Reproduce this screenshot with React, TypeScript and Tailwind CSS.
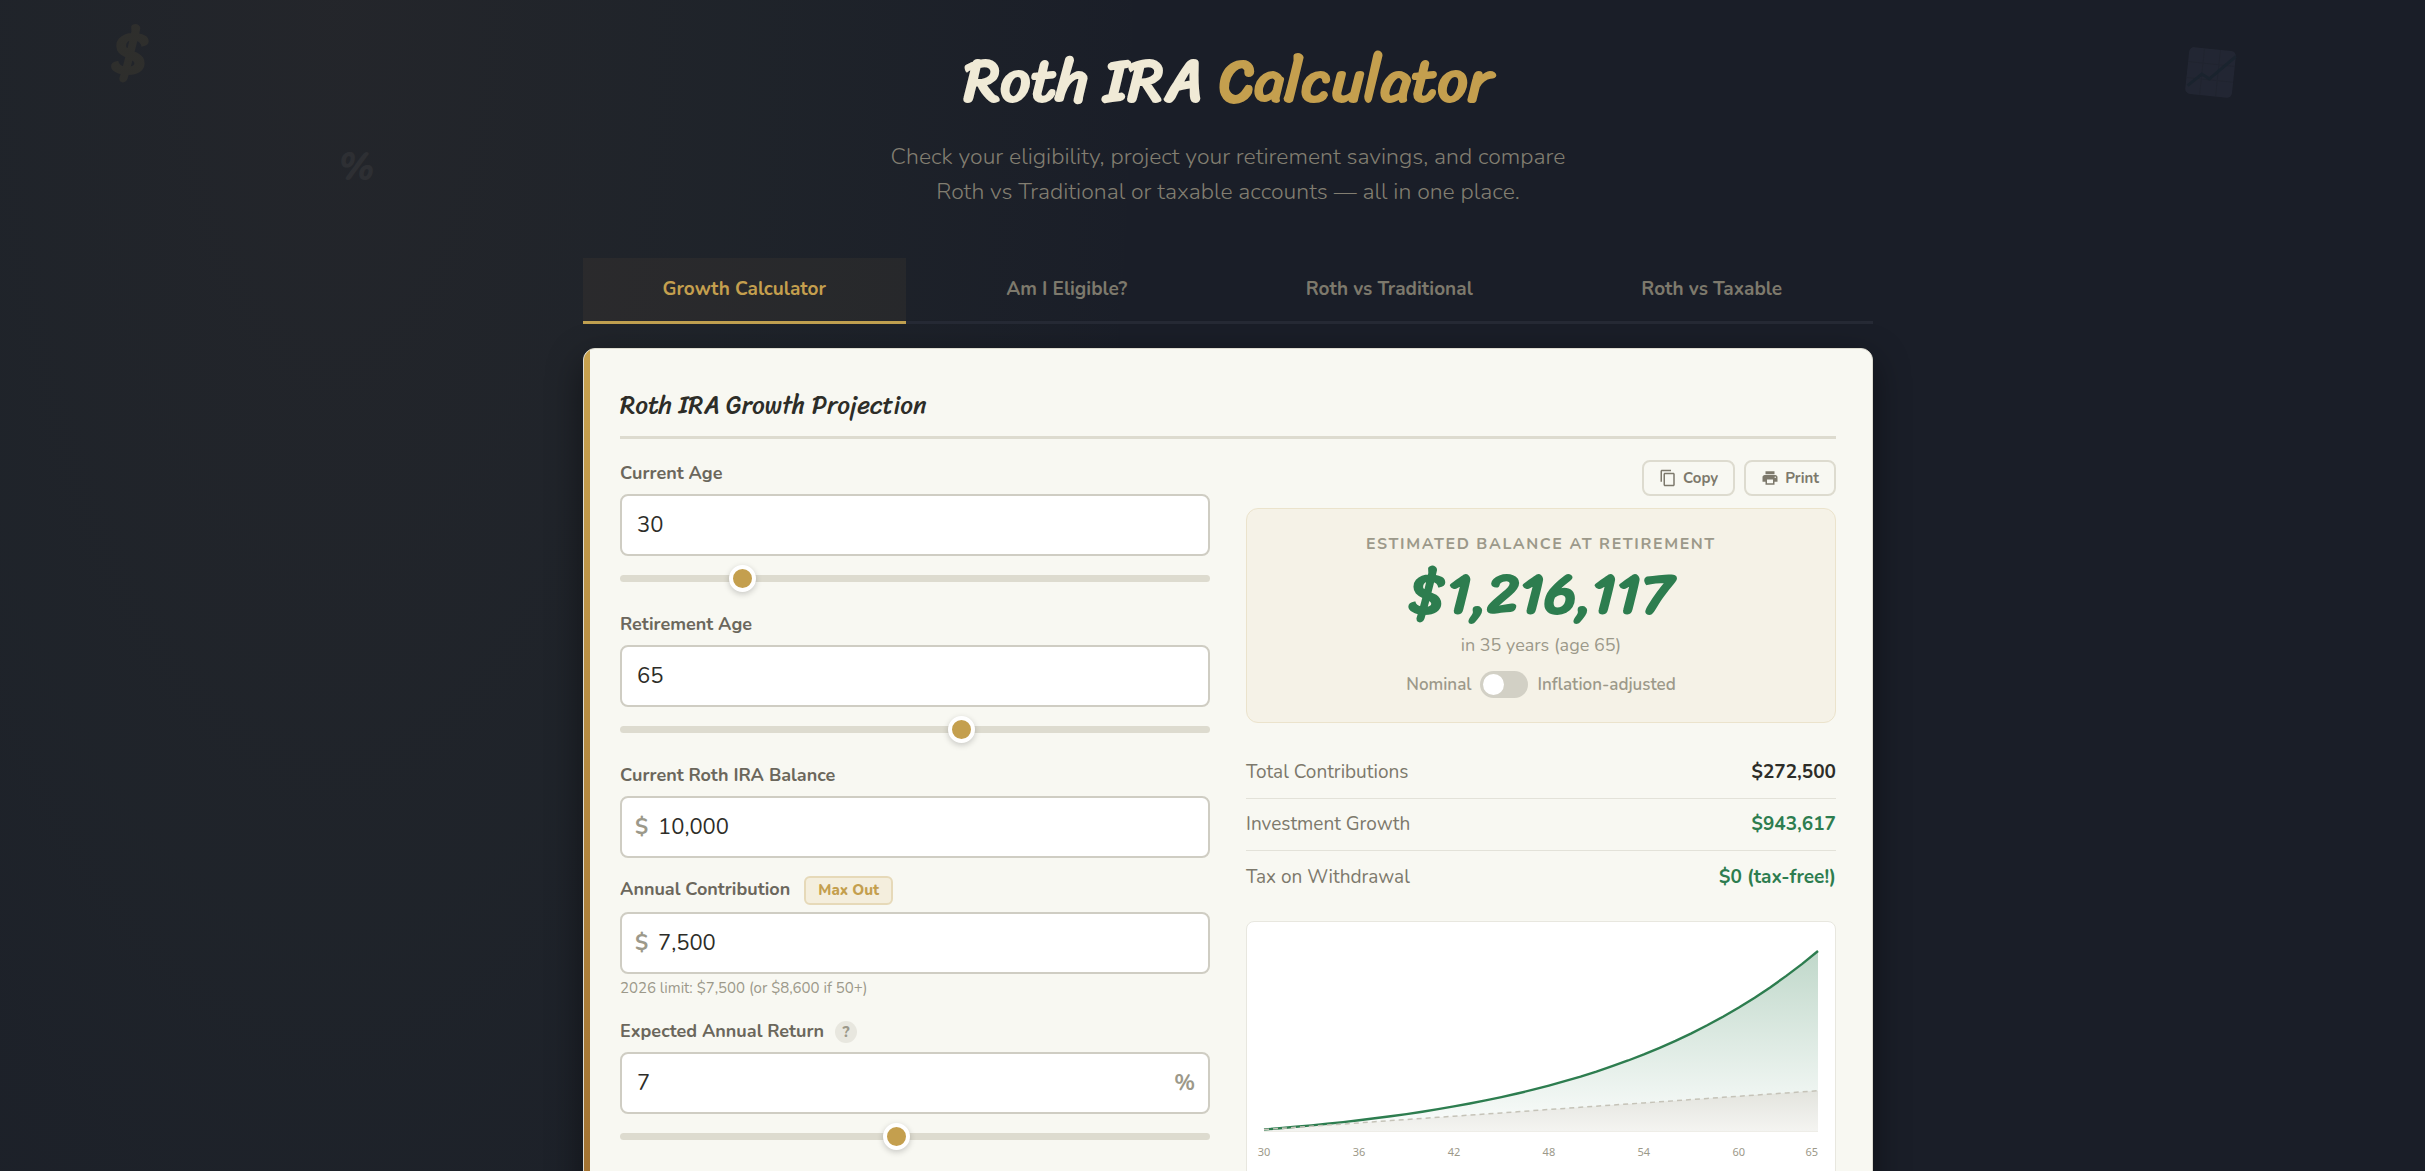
import React, { useId, useState } from 'react';
import { MdContentCopy, MdPrint } from 'react-icons/md';

const TABS = ['Growth Calculator', 'Am I Eligible?', 'Roth vs Traditional', 'Roth vs Taxable'];

const currency = (n: number) => '$' + Math.round(n).toLocaleString('en-US');

interface FieldProps {
    label: string;
    value: string;
    onChange: (value: string) => void;
    prefix?: string;
    suffix?: string;
    hint?: string;
    extra?: React.ReactNode;
    slider?: { min: number; max: number };
}

const Field: React.FC<FieldProps> = ({ label, value, onChange, prefix, suffix, hint, extra, slider }) => {
    const id = useId();

    return (
        <div className="mb-[18px]">
            <div className="flex items-start mb-[7px]">
                <label htmlFor={id} className="text-[18px] leading-[27px] font-bold text-[#6b675c]">{label}</label>
                {extra}
            </div>
            <div className="relative">
                {prefix && <span className="absolute left-[15px] top-0 leading-[62px] text-[22px] font-bold text-[#9c998a]">{prefix}</span>}
                <input
                    id={id}
                    type="text"
                    value={value}
                    onChange={e => onChange(e.target.value)}
                    className={`w-full h-[62px] rounded-lg border-2 border-[#cfcdc3] bg-white text-[22px] text-[#2d2d28] focus:outline-none focus:border-[#c49f4e] ${prefix ? 'pl-9' : 'pl-[15px]'} pr-10`}
                />
                {suffix && <span className="absolute right-[15px] top-0 leading-[62px] text-[22px] font-bold text-[#9c998a]">{suffix}</span>}
            </div>
            {hint && <p className="mt-0.5 text-[15px] leading-6 text-[#9c998a]">{hint}</p>}
            {slider && (
                <input
                    type="range"
                    aria-label={label}
                    min={slider.min}
                    max={slider.max}
                    value={Number(value)}
                    onChange={e => onChange(e.target.value)}
                    className="block w-full h-[29px] mt-2 appearance-none bg-transparent cursor-pointer [&::-webkit-slider-runnable-track]:h-[7px] [&::-webkit-slider-runnable-track]:rounded-sm [&::-webkit-slider-runnable-track]:bg-[#dddbcf] [&::-webkit-slider-thumb]:appearance-none [&::-webkit-slider-thumb]:size-[27px] [&::-webkit-slider-thumb]:-mt-2.5 [&::-webkit-slider-thumb]:rounded-full [&::-webkit-slider-thumb]:border-4 [&::-webkit-slider-thumb]:border-white [&::-webkit-slider-thumb]:bg-[#c49f4e] [&::-webkit-slider-thumb]:shadow-[0_2px_6px_rgba(0,0,0,0.2)]"
                />
            )}
        </div>
    );
};

interface Point {
    age: number;
    balance: number;
    contributed: number;
}

const GrowthChart: React.FC<{ data: Point[] }> = ({ data }) => {
    const left = 17;
    const right = 571;
    const top = 29;
    const bottom = 209;
    const first = data[0];
    const last = data[data.length - 1];
    const x = (age: number) => left + ((age - first.age) / (last.age - first.age || 1)) * (right - left);
    const y = (v: number) => bottom - (v / last.balance) * (bottom - top);
    const line = (key: 'balance' | 'contributed') => data.map((p, i) => `${i ? 'L' : 'M'}${x(p.age).toFixed(1)},${y(p[key]).toFixed(1)}`).join(' ');
    const close = ` L${right},${bottom} L${left},${bottom} Z`;
    const ticks = data.filter((p, i) => i % 6 === 0 || p === last);

    return (
        <svg viewBox="0 0 588 262" className="block w-full">
            <defs>
                <linearGradient id="growthFill" x1="0" y1="0" x2="0" y2="1">
                    <stop offset="0" stopColor="#2d7d4f" stopOpacity="0.3" />
                    <stop offset="1" stopColor="#2d7d4f" stopOpacity="0.02" />
                </linearGradient>
                <linearGradient id="contribFill" x1="0" y1="0" x2="0" y2="1">
                    <stop offset="0" stopColor="#e3e4de" />
                    <stop offset="1" stopColor="#f4f4f1" />
                </linearGradient>
            </defs>
            <line x1={left} y1={bottom} x2={right} y2={bottom} stroke="#dedcd0" />
            <path d={line('balance') + close} fill="url(#growthFill)" />
            <path d={line('contributed') + close} fill="url(#contribFill)" />
            <path d={line('balance')} fill="none" stroke="#2d7d4f" strokeWidth="2.4" />
            <path d={line('contributed')} fill="none" stroke="#c5c3b8" strokeWidth="1.5" strokeDasharray="5 4" />
            {ticks.map(p => (
                <text key={p.age} x={p === last ? right : x(p.age)} y="234" textAnchor={p === last ? 'end' : 'middle'} fill="#9c998a" className="text-[11px] font-['Noto_Sans',sans-serif]">
                    {p.age}
                </text>
            ))}
        </svg>
    );
};

const App: React.FC = () => {
    const [tab, setTab] = useState(0);
    const [age, setAge] = useState('30');
    const [retireAge, setRetireAge] = useState('65');
    const [balance, setBalance] = useState('10,000');
    const [contribution, setContribution] = useState('7,500');
    const [rate, setRate] = useState('7');
    const [inflation, setInflation] = useState(false);

    const toNumber = (s: string) => Number(s.replace(/,/g, '')) || 0;
    const years = Math.max(1, toNumber(retireAge) - toNumber(age));
    const data: Point[] = [{ age: toNumber(age), balance: toNumber(balance), contributed: toNumber(balance) }];
    for (let i = 1; i <= years; i++) {
        const prev = data[i - 1];
        data.push({
            age: prev.age + 1,
            balance: (prev.balance + toNumber(contribution)) * (1 + toNumber(rate) / 100),
            contributed: prev.contributed + toNumber(contribution),
        });
    }
    const end = data[years];
    const shown = inflation ? end.balance / Math.pow(1.03, years) : end.balance;

    const rows = [
        { label: 'Total Contributions', value: currency(end.contributed), color: 'text-[#2d2d28]' },
        { label: 'Investment Growth', value: currency(end.balance - end.contributed), color: 'text-[#2d7d4f]' },
        { label: 'Tax on Withdrawal', value: '$0 (tax-free!)', color: 'text-[#2d7d4f]' },
    ];

    return (
        <div className="relative h-screen overflow-y-auto overflow-x-hidden [scrollbar-width:none] pl-[31px] bg-[#1a1e28] bg-[radial-gradient(ellipse_820px_1900px_at_335px_0px,rgba(190,160,85,0.06),rgba(150,165,90,0.04)_50%,transparent)] font-['Nunito','Open_Sans',sans-serif]">
            {/* Floating shapes */}
            <span aria-hidden="true" className="absolute left-[4.6%] top-[18px] text-[58px] leading-[72px] font-bold font-['Sriracha','Lato',cursive] text-[#c49f4e] opacity-8">$</span>
            <span aria-hidden="true" className="absolute left-[14%] top-[140px] text-[40px] leading-[52px] font-['Sriracha','Lato',cursive] text-[#f0ead6] opacity-5">%</span>
            <svg aria-hidden="true" viewBox="0 0 52 52" className="absolute right-[188px] top-[47px] size-[52px] rotate-6 opacity-80">
                <rect x="2" y="2" width="47" height="47" rx="5" fill="#252936" />
                <path d="M17 2v47M33 2v47M2 17h47M2 33h47" stroke="#222632" />
                <path d="M4 41L17 28L25 32L49 7" fill="none" stroke="#1b2530" strokeWidth="3" />
            </svg>

            <div className="relative w-full max-w-[1290px] mx-auto">
                {/* Header */}
                <header className="pt-[41px] text-center">
                    <h1 className="text-[60px] leading-20 font-bold font-['Sriracha','Lato',cursive] text-[#f0ead6]">
                        Roth IRA <span className="text-[#c49f4e]">Calculator</span>
                    </h1>
                    <p className="mt-[18px] text-[23px] leading-[35px] font-light text-[#827e71]">
                        Check your eligibility, project your retirement savings, and compare<br />
                        Roth vs Traditional or taxable accounts — all in one place.
                    </p>
                </header>

                {/* Tabs */}
                <nav className="grid grid-cols-4 mt-[49px]">
                    {TABS.map((t, i) => (
                        <button
                            key={t}
                            onClick={() => setTab(i)}
                            className={`h-[66px] border-b-3 text-[19px] font-bold ${
                                tab === i ? 'border-[#c0a050] bg-[#c49f4e]/6 text-[#c49f4e]' : 'border-[#262a35] text-[#7d796c]'
                            }`}
                        >
                            {t}
                        </button>
                    ))}
                </nav>

                {/* Card */}
                <main className="relative mt-6 p-9 overflow-hidden rounded-xl border border-[#dddbd0] bg-[#f8f8f2] shadow-[0_12px_36px_rgba(0,0,0,0.45)]">
                    <div className="absolute inset-y-0 left-0 w-1.5 bg-linear-to-b from-[#c8a24f] to-[#a07030]" />
                    <h2 className="pb-3 mb-[21px] border-b-3 border-[#dddbcf] text-[25px] leading-[39px] font-['Sriracha','Lato',cursive] text-[#2d2d28]">Roth IRA Growth Projection</h2>

                    <div className="grid grid-cols-2 gap-9">
                        {/* Inputs */}
                        <form onSubmit={e => e.preventDefault()}>
                            <Field label="Current Age" value={age} onChange={setAge} slider={{ min: 18, max: 80 }} />
                            <Field label="Retirement Age" value={retireAge} onChange={setRetireAge} slider={{ min: 30, max: 90 }} />
                            <Field label="Current Roth IRA Balance" value={balance} onChange={setBalance} prefix="$" />
                            <Field
                                label="Annual Contribution"
                                value={contribution}
                                onChange={setContribution}
                                prefix="$"
                                hint="2026 limit: $7,500 (or $8,600 if 50+)"
                                extra={
                                    <button type="button" onClick={() => setContribution('7,500')} className="ml-3.5 h-[29px] px-3 rounded-md border-2 border-[#e6d9b8] bg-[#f4eedd] text-[15px] leading-none font-extrabold text-[#c49f4e]">
                                        Max Out
                                    </button>
                                }
                            />
                            <Field
                                label="Expected Annual Return"
                                value={rate}
                                onChange={setRate}
                                suffix="%"
                                slider={{ min: 0, max: 15 }}
                                extra={<button type="button" aria-label="About annual return" className="ml-[11px] mt-[3px] size-[22px] rounded-full bg-[#e8e7df] text-[15px] leading-none font-extrabold text-[#9c998a]">?</button>}
                            />
                        </form>

                        {/* Results */}
                        <section>
                            <div className="flex justify-end gap-[9px] mb-3">
                                <button className="flex items-center gap-1.5 h-9 px-[15px] rounded-lg border-2 border-[#dddbcf] text-[15px] font-bold text-[#7d796c]">
                                    <MdContentCopy className="size-[18px]" />
                                    Copy
                                </button>
                                <button className="flex items-center gap-1.5 h-9 px-[15px] rounded-lg border-2 border-[#dddbcf] text-[15px] font-bold text-[#7d796c]">
                                    <MdPrint className="size-[18px]" />
                                    Print
                                </button>
                            </div>

                            <div className="rounded-xl border border-[#ebe3cc] bg-[#f5f2e7] pt-[23px] pb-6 text-center">
                                <p className="text-[16px] leading-6 font-bold uppercase tracking-widest text-[#9c998a]">Estimated Balance at Retirement</p>
                                <p className="text-[57px] leading-[76px] font-bold font-['Sriracha','Lato',cursive] text-[#2d7d4f]">{currency(shown)}</p>
                                <p className="text-[18px] leading-[27px] text-[#9c998a]">in {years} years (age {retireAge})</p>
                                <label className="flex items-center justify-center gap-[9px] mt-3 h-[27px] text-[17px] font-semibold text-[#9c998a] cursor-pointer">
                                    Nominal
                                    <input
                                        type="checkbox"
                                        role="switch"
                                        checked={inflation}
                                        onChange={e => setInflation(e.target.checked)}
                                        className="appearance-none w-12 h-[27px] p-[3px] rounded-full bg-[#d2d0c5] checked:bg-[#2d7d4f] before:block before:size-[21px] before:rounded-full before:bg-white checked:before:translate-x-[21px]"
                                    />
                                    Inflation-adjusted
                                </label>
                            </div>

                            <dl className="mt-6">
                                {rows.map(r => (
                                    <div key={r.label} className="flex items-center justify-between h-[52px] border-b border-[#e3e2d9] last:border-b-0 text-[19px]">
                                        <dt className="text-[#7d796c]">{r.label}</dt>
                                        <dd className={`font-bold ${r.color}`}>{r.value}</dd>
                                    </div>
                                ))}
                            </dl>

                            <div className="mt-[18px] rounded-lg border border-[#e8e7df] bg-white">
                                <GrowthChart data={data} />
                            </div>
                        </section>
                    </div>
                </main>
            </div>
        </div>
    );
};

export default App;
